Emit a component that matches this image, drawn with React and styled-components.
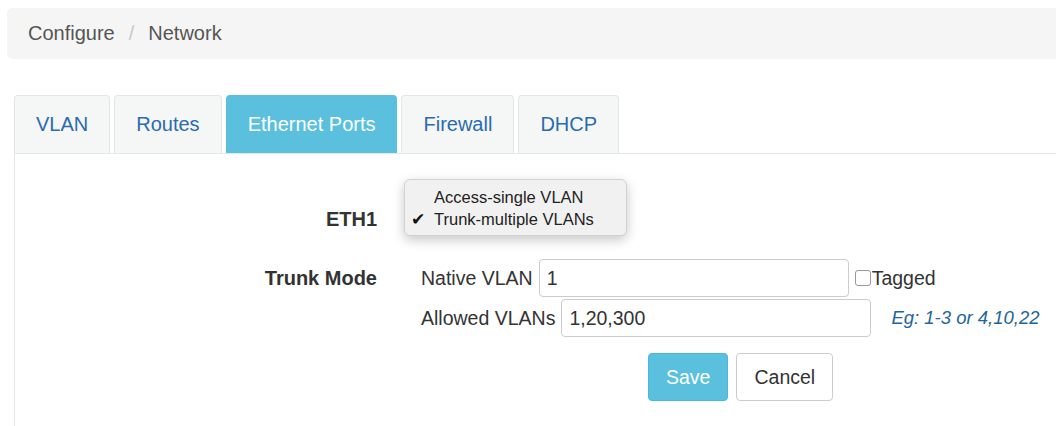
import React from 'react'
import styled, { createGlobalStyle } from 'styled-components'

const Global = createGlobalStyle`
  html, body {
    margin: 0;
    padding: 0;
    background: #fff;
    overflow: hidden;
  }
  body {
    font-family: "Liberation Sans", Arial, sans-serif;
    color: #333;
  }
`

const tabs = ['VLAN', 'Routes', 'Ethernet Ports', 'Firewall', 'DHCP']

function App() {
  return (
    <S.Page>
      <Global />
      <S.Breadcrumb>
        <span>Configure</span>
        <S.Sep>/</S.Sep>
        <span>Network</span>
      </S.Breadcrumb>

      <S.Body>
        <S.Tabs>
          {tabs.map((t) => (
            <S.Tab key={t} active={t === 'Ethernet Ports'}>
              {t}
            </S.Tab>
          ))}
        </S.Tabs>

        <S.Panel>
          <S.Form>
            <S.Label end>ETH1</S.Label>
            <S.Menu>
              <S.MenuItem>Access-single VLAN</S.MenuItem>
              <S.MenuItem checked>Trunk-multiple VLANs</S.MenuItem>
            </S.Menu>

            <S.Label top>Trunk Mode</S.Label>
            <S.Fields>
              <S.FieldRow>
                <S.FieldLabel>Native VLAN</S.FieldLabel>
                <S.Input defaultValue="1" />
                <S.Check>
                  <S.Box />
                  Tagged
                </S.Check>
              </S.FieldRow>
              <S.FieldRow>
                <S.FieldLabel>Allowed VLANs</S.FieldLabel>
                <S.Input defaultValue="1,20,300" />
                <S.Hint>Eg: 1-3 or 4,10,22</S.Hint>
              </S.FieldRow>
              <S.Buttons>
                <S.Button primary>Save</S.Button>
                <S.Button>Cancel</S.Button>
              </S.Buttons>
            </S.Fields>
          </S.Form>
        </S.Panel>
      </S.Body>
    </S.Page>
  )
}

const S = {
  Page: styled.div`
    width: 1056px;
    height: 426px;
    padding: 8px 0 0 7px;
    box-sizing: border-box;
    display: flex;
    flex-direction: column;
  `,
  Breadcrumb: styled.div`
    height: 51px;
    margin-right: -10px;
    padding: 0 21px;
    display: flex;
    align-items: center;
    background: #f5f5f5;
    border-radius: 5px;
    font-size: 20px;
    color: #555;
  `,
  Sep: styled.span`
    color: #c8c8c8;
    padding: 0 14px;
  `,
  Body: styled.div`
    margin-top: 36px;
    padding-left: 7px;
    flex: 1;
    display: flex;
    flex-direction: column;
  `,
  Tabs: styled.div`
    display: flex;
    gap: 4px;
    height: 58px;
  `,
  Tab: styled.div`
    padding: 0 21px;
    display: flex;
    align-items: center;
    font-size: 20px;
    color: ${(p) => (p.active ? '#fff' : '#2a6cae')};
    background: ${(p) => (p.active ? '#5bc0de' : '#f5f6f6')};
    border: 1px solid ${(p) => (p.active ? '#5bc0de' : '#e2e6e8')};
    border-bottom: none;
    border-radius: 4px 4px 0 0;
    box-sizing: border-box;
  `,
  Panel: styled.div`
    flex: 1;
    border-top: 1px solid #e2e7e9;
    border-left: 1px solid #e2e7e9;
    margin-right: -10px;
    padding-top: 25px;
  `,
  Form: styled.div`
    display: grid;
    grid-template-columns: 362px 1fr;
    column-gap: 27px;
    row-gap: 23px;
    align-items: start;
  `,
  Label: styled.div`
    text-align: right;
    font-weight: bold;
    font-size: 20px;
    align-self: ${(p) => (p.end ? 'end' : 'start')};
    padding-bottom: ${(p) => (p.end ? '5px' : '0')};
    line-height: ${(p) => (p.top ? '38px' : '23px')};
  `,
  Menu: styled.div`
    width: 223px;
    height: 57px;
    box-sizing: border-box;
    padding-top: 6px;
    background: #f1f1f1;
    border: 1px solid #d2d2d2;
    border-radius: 6px;
    box-shadow: 0 4px 12px rgba(0, 0, 0, 0.22);
    font-size: 16.5px;
    color: #222;
  `,
  MenuItem: styled.div`
    position: relative;
    padding-left: 29px;
    line-height: 22px;

    &::before {
      content: ${(p) => (p.checked ? '"✔"' : '""')};
      position: absolute;
      left: 6px;
      top: 0;
      font-family: "DejaVu Sans", sans-serif;
      font-size: 17px;
      color: #111;
    }
  `,
  Fields: styled.div`
    display: flex;
    flex-direction: column;
    gap: 2px;
    padding-left: 17px;
  `,
  FieldRow: styled.div`
    display: flex;
    align-items: center;
    height: 38px;
  `,
  FieldLabel: styled.span`
    font-size: 19.5px;
    margin-right: 6px;
  `,
  Input: styled.input`
    width: 310px;
    height: 38px;
    box-sizing: border-box;
    border: 1px solid #ccc;
    border-radius: 4px;
    padding: 0 7px;
    font-family: "Liberation Sans", Arial, sans-serif;
    font-size: 19.5px;
    color: #333;
    outline: none;
  `,
  Check: styled.label`
    display: flex;
    align-items: center;
    margin-left: 6px;
    font-size: 19.5px;
  `,
  Box: styled.span`
    width: 14px;
    height: 14px;
    border: 1px solid #999;
    border-radius: 3px;
    background: #fff;
    margin-right: 1px;
  `,
  Hint: styled.span`
    margin-left: 20px;
    font-style: italic;
    font-size: 18.5px;
    color: #23659a;
  `,
  Buttons: styled.div`
    display: flex;
    gap: 8px;
    margin-top: 14px;
    padding-left: 227px;
  `,
  Button: styled.button`
    height: 48px;
    padding: 0 17px;
    font-family: "Liberation Sans", Arial, sans-serif;
    font-size: 19.5px;
    border-radius: 4px;
    border: 1px solid ${(p) => (p.primary ? '#46b8da' : '#ccc')};
    background: ${(p) => (p.primary ? '#5bc0de' : '#fff')};
    color: ${(p) => (p.primary ? '#fff' : '#333')};
  `,
}

export default App
